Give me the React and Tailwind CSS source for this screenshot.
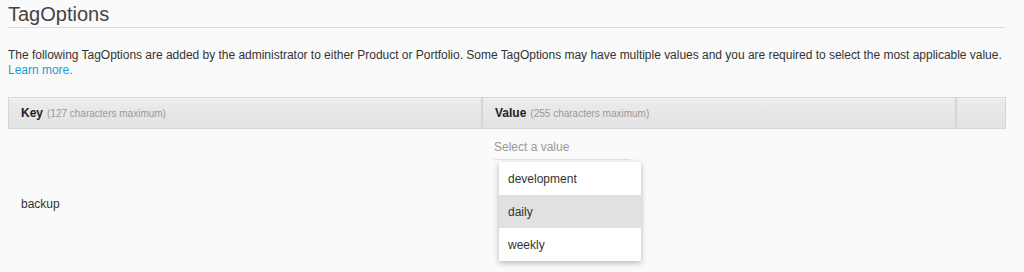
import React from 'react';

const font = { fontFamily: '"Liberation Sans", Arial, sans-serif' };

function HeaderCell({ title, hint, className = '' }) {
  return (
    <div className={`flex items-center h-full border border-[#d5d5d5] bg-gradient-to-b from-[#ececec] to-[#e2e2e2] shadow-[inset_0_1px_0_#f6f6f6] px-3 ${className}`}>
      {title && <span className="text-[12px] font-bold text-[#222]">{title}</span>}
      {hint && <span className="ml-1 text-[10px] text-[#999]">{hint}</span>}
    </div>
  );
}

export default function App() {
  const options = ['development', 'daily', 'weekly'];
  return (
    <div className="w-[1024px] h-[272px] bg-[#fafafa] overflow-hidden" style={font}>
      <div className="pl-2 pr-[19px]">
        <h2 className="pt-[3px] h-[28px] text-[20px] leading-[22px] text-[#444] border-b border-[#ddd]">TagOptions</h2>
        <p className="mt-[20px] text-[12px] leading-[15px] text-[#333] whitespace-nowrap tracking-[-0.02px]">
          The following TagOptions are added by the administrator to either Product or Portfolio. Some TagOptions may have multiple values and you are required to select the most applicable value.
          <br />
          <a className="text-[#1b9ad6]">Learn more.</a>
        </p>

        <div className="mt-[19px] grid grid-cols-[474px_474px_50px] h-[32px] gap-0">
          <HeaderCell title="Key" hint="(127 characters maximum)" />
          <HeaderCell title="Value" hint="(255 characters maximum)" />
          <HeaderCell />
        </div>

        <div className="grid grid-cols-[474px_474px_50px] h-[143px]">
          <div className="pl-[13px] pt-[68px] text-[12px] leading-[14px] text-[#333]">backup</div>
          <div className="relative pl-[12px] pt-[11px]">
            <div className="w-[136px] border-b border-[#e3e3e3] pb-[5px] text-[12px] leading-[14px] text-[#999]">Select a value</div>
            <div className="absolute left-[17px] top-[33px] w-[142px] bg-white shadow-[0_2px_6px_rgba(0,0,0,0.28)]">
              {options.map((o) => (
                <div
                  key={o}
                  className={`h-[33px] flex items-center pl-[9px] text-[12px] text-[#333] ${o === 'daily' ? 'bg-[#e1e1e1]' : ''}`}
                >
                  {o}
                </div>
              ))}
            </div>
          </div>
          <div />
        </div>
      </div>
    </div>
  );
}
